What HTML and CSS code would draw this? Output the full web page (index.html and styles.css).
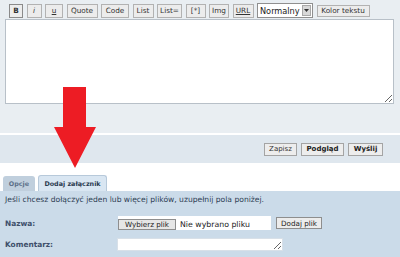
FILE: index.html
```html
<!DOCTYPE html>
<html lang="pl">
<head>
<meta charset="utf-8">
<link rel="stylesheet" href="styles.css">
</head>
<body>
<div class="editor">
  <div class="toolbar">
    <span class="btn w-b"><b>B</b></span>
    <span class="btn w-i"><i>i</i></span>
    <span class="btn w-u"><u>u</u></span>
    <span class="btn w-quote">Quote</span>
    <span class="btn w-code">Code</span>
    <span class="btn w-list">List</span>
    <span class="btn w-liste">List=</span>
    <span class="btn w-star">[*]</span>
    <span class="btn w-img">Img</span>
    <span class="btn w-url"><u>URL</u></span>
    <span class="select"><span class="sel-text">Normalny</span><span class="sel-arrow"><svg width="5" height="3" viewBox="0 0 5 3"><path d="M0 0H5L2.5 3Z" fill="#333"/></svg></span></span>
    <span class="btn w-kolor">Kolor tekstu</span>
  </div>
  <textarea class="message"></textarea>
</div>
<div class="submit-bar">
  <span class="sbtn w-zapisz">Zapisz</span>
  <span class="sbtn bold w-podglad">Podgląd</span>
  <span class="sbtn bold w-wyslij">Wyślij</span>
</div>
<div class="tabs">
  <span class="tab tab-off">Opcje</span>
  <span class="tab tab-on">Dodaj załącznik</span>
</div>
<div class="panel">
  <p class="intro">Jeśli chcesz dołączyć jeden lub więcej plików, uzupełnij pola poniżej.</p>
  <div class="form">
    <span class="label">Nazwa:</span>
    <div class="file-row">
      <span class="file-input"><span class="file-btn">Wybierz plik</span><span class="file-name">Nie wybrano pliku</span></span>
      <span class="add-btn">Dodaj plik</span>
    </div>
    <span class="label">Komentarz:</span>
    <div><textarea class="comment"></textarea></div>
  </div>
</div>
<svg class="arrow" width="42" height="81" viewBox="0 0 42 81"><polygon points="9,0 32,0 32,40 42,40 21,81 0,40 9,40" fill="#ed1c24"/></svg>
</body>
</html>
```

FILE: styles.css
```css
* { box-sizing: border-box; }
html, body { margin: 0; padding: 0; }
body {
  width: 400px;
  height: 257px;
  overflow: hidden;
  background: #ffffff;
  font-family: "DejaVu Sans", Verdana, sans-serif;
  color: #2e3d50;
  position: relative;
}
.editor {
  background: #e9eef2;
  height: 133px;
  padding: 3px 6px 0 5px;
}
.toolbar {
  display: flex;
  align-items: center;
  gap: 3.5px;
  padding-left: 4px;
  height: 15px;
}
.btn {
  display: inline-flex;
  align-items: center;
  justify-content: center;
  height: 14px;
  background: #ececec;
  border: 1px solid #b2b2b2;
  font-size: 7.3px;
  color: #333;
}
.w-b { width: 14px; border-color: #8a8a8a; }
.w-i { width: 15px; }
.w-u { width: 18px; }
.w-quote { width: 31px; }
.w-code { width: 28px; }
.w-list { width: 21px; }
.w-liste { width: 25px; }
.w-star { width: 20px; }
.w-img { width: 20px; }
.w-url { width: 21px; }
.w-kolor { width: 53px; height: 12px; }
.select {
  display: inline-flex;
  align-items: center;
  width: 56px;
  height: 15px;
  background: #fff;
  border: 1px solid #8f8f8f;
  padding: 0 1px 0 2px;
  justify-content: space-between;
}
.sel-text { font-size: 8.2px; color: #222; }
.sel-arrow {
  display: inline-flex;
  align-items: center;
  justify-content: center;
  width: 9px;
  height: 11px;
  background: #d8d8d8;
  border: 1px solid #a8a8a8;
}
.message {
  display: block;
  margin-top: 1px;
  width: 389px;
  height: 85px;
  background: #fff;
  border: 1px solid #b8c0c8;
  resize: both;
  outline: none;
  padding: 0;
}
.submit-bar {
  margin-top: 2px;
  height: 28px;
  background: #dfe7ee;
  display: flex;
  justify-content: flex-end;
  align-items: center;
  gap: 4px;
  padding-right: 17px;
}
.sbtn {
  display: inline-flex;
  align-items: center;
  justify-content: center;
  height: 13px;
  background: #ededed;
  border: 1px solid #a4a4a4;
  font-size: 7px;
  color: #333;
}
.sbtn.bold { font-weight: bold; color: #222; }
.w-zapisz { width: 33px; }
.w-podglad { width: 43px; }
.w-wyslij { width: 35px; }
.tabs {
  margin-top: 12px;
  display: flex;
  align-items: flex-end;
  gap: 3px;
  padding-left: 3px;
  height: 16px;
}
.tab {
  display: inline-flex;
  align-items: center;
  justify-content: center;
  font-size: 6.4px;
  font-weight: bold;
  border-radius: 3px 3px 0 0;
}
.tab-off {
  width: 32px;
  height: 15px;
  background: #c0cfdd;
  color: #5c7089;
}
.tab-on {
  width: 69px;
  height: 16px;
  background: #d9e6f2;
  color: #2a3a4f;
  border: 1px solid #b7c9da;
  border-bottom: none;
}
.panel {
  background: #cbdbe9;
  height: 66px;
  padding: 4px 5px 0 5px;
}
.intro {
  margin: 0;
  font-size: 7.6px;
  color: #2e3e54;
  line-height: 10px;
}
.form {
  display: grid;
  grid-template-columns: 112px auto;
  align-items: center;
  row-gap: 8px;
  margin-top: 11px;
}
.label {
  font-size: 7.4px;
  font-weight: bold;
  color: #3e4f6b;
}
.file-row {
  display: flex;
  align-items: center;
  gap: 5px;
}
.file-input {
  display: inline-flex;
  align-items: flex-end;
  width: 153px;
  height: 14px;
  background: #fff;
  margin-left: 1px;
}
.file-btn {
  display: inline-flex;
  align-items: center;
  justify-content: center;
  width: 58px;
  height: 11px;
  background: #e6e6e6;
  border: 1px solid #8e8e8e;
  font-size: 7.2px;
  color: #222;
}
.file-name {
  font-size: 7.8px;
  color: #222;
  margin-left: 4px;
  line-height: 11px;
}
.add-btn {
  display: inline-flex;
  align-items: center;
  justify-content: center;
  width: 46px;
  height: 12px;
  background: #ececec;
  border: 1px solid #8e8e8e;
  font-size: 7.2px;
  color: #222;
}
.comment {
  display: block;
  width: 166px;
  height: 13px;
  background: #fff;
  border: 1px solid #d8e0e8;
  resize: both;
  padding: 0;
  outline: none;
}
.arrow {
  position: absolute;
  left: 54px;
  top: 87px;
}
```
